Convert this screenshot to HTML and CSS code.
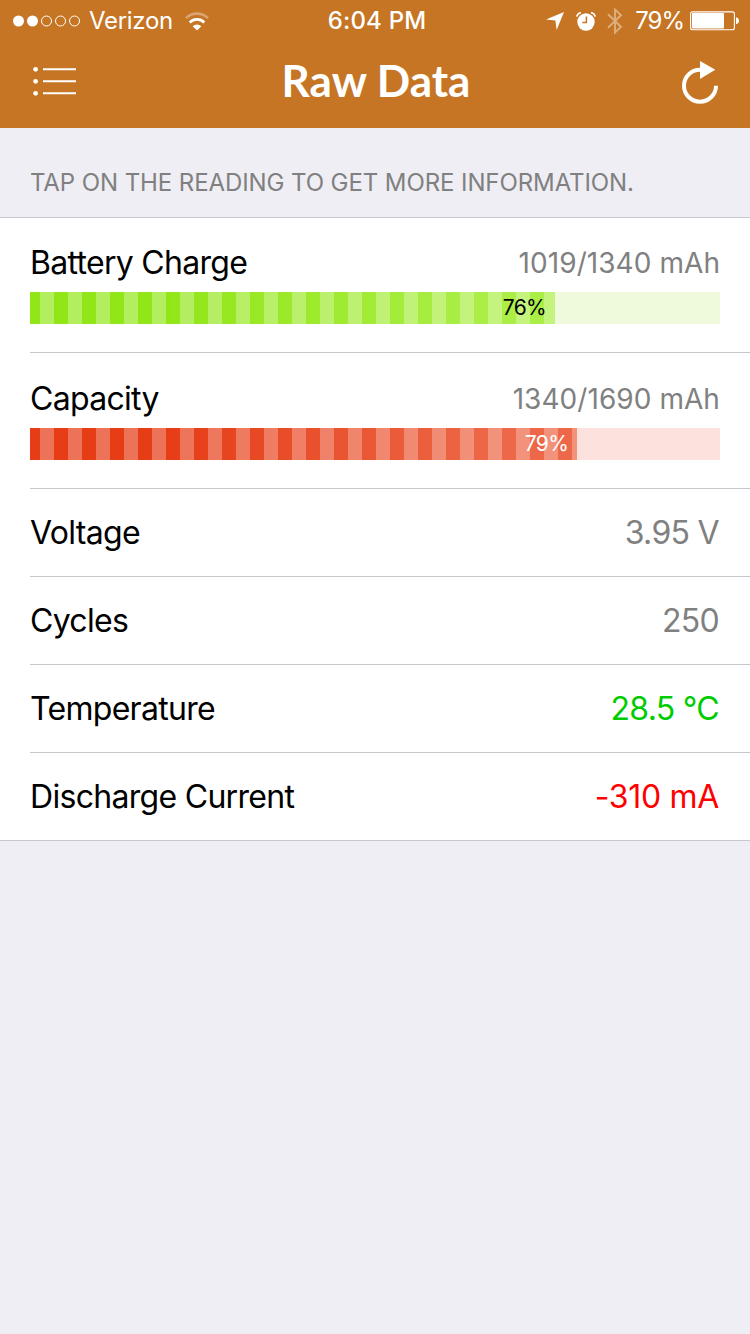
FILE: index.html
```html
<!DOCTYPE html>
<html lang="en">
<head>
    <meta charset="UTF-8">
    <meta name="viewport" content="width=device-width, initial-scale=1.0">
    <title>Raw Data</title>
    <link rel="stylesheet" href="styles.css">
</head>
<body>
    <header class="header">
        <div class="status-bar">
            <div class="status-left">
                <svg class="signal" width="68" height="14" viewBox="0 0 68 14">
                    <circle cx="5.5" cy="7" r="5.5" fill="#fff"/>
                    <circle cx="19.5" cy="7" r="5.5" fill="#fff"/>
                    <circle cx="33.5" cy="7" r="5" fill="none" stroke="#fff"/>
                    <circle cx="47.5" cy="7" r="5" fill="none" stroke="#fff"/>
                    <circle cx="61.5" cy="7" r="5" fill="none" stroke="#fff"/>
                </svg>
                <span class="carrier">Verizon</span>
                <svg class="wifi" width="24" height="19" viewBox="0 0 24 19">
                    <path d="M1 6.2a15.6 15.6 0 0 1 22 0" fill="none" stroke="#fff" stroke-opacity=".35" stroke-width="2.6"/>
                    <path d="M4.7 10.4a10.3 10.3 0 0 1 14.6 0" fill="none" stroke="#fff" stroke-width="2.8"/>
                    <path d="M12 18.6l-4.3-4.4a6.2 6.2 0 0 1 8.6 0z" fill="#fff"/>
                </svg>
            </div>
            <div class="clock">6:04 PM</div>
            <div class="status-right">
                <svg class="location" width="18" height="18" viewBox="0 0 18 18">
                    <path d="M18 0L10.6 18 9.4 8.6 0 7.6z" fill="#fff"/>
                </svg>
                <svg class="alarm" width="20" height="19" viewBox="0 0 20 19">
                    <circle cx="10" cy="10" r="8.7" fill="#fff"/>
                    <path d="M.8 4.6Q1.6 1 5 .7M19.2 4.6Q18.4 1 15 .7" fill="none" stroke="#fff" stroke-width="1.8"/>
                    <path d="M10.4 4.6v6H6.3" fill="none" stroke="#c67524" stroke-width="1.5"/>
                </svg>
                <svg class="bluetooth" width="16" height="28" viewBox="0 0 16 28">
                    <path d="M1 7.2l13 12.6-6 5.8V2.4l6 5.8L1 20.8" fill="none" stroke="#fff" stroke-opacity=".42" stroke-width="1.9"/>
                </svg>
                <span class="percent">79%</span>
                <svg class="battery" width="50" height="20" viewBox="0 0 50 20">
                    <rect x=".6" y=".9" width="43.8" height="17.8" rx="2" fill="none" stroke="#fff" stroke-width="1.1"/>
                    <rect x="2" y="2" width="32" height="15.5" rx=".8" fill="#fff"/>
                    <path d="M46 6.3q3 .6 3 3.5t-3 3.5z" fill="#fff"/>
                </svg>
            </div>
        </div>
        <nav class="nav-bar">
            <svg class="menu-icon" width="44" height="32" viewBox="0 0 44 32">
                <circle cx="2.6" cy="4.3" r="2.4" fill="#fff"/>
                <circle cx="2.6" cy="16.3" r="2.4" fill="#fff"/>
                <circle cx="2.6" cy="28.3" r="2.4" fill="#fff"/>
                <path d="M10 4.3h33M10 16.3h33M10 28.3h33" stroke="#fff" stroke-width="2"/>
            </svg>
            <h1 class="title">Raw Data</h1>
            <svg class="refresh-icon" width="38" height="44" viewBox="0 0 38 44">
                <path d="M19 8.7a16 16 0 1 0 16 16" fill="none" stroke="#fff" stroke-width="4"/>
                <path d="M19 0l15.3 8.7L19 18z" fill="#fff"/>
            </svg>
        </nav>
    </header>

    <div class="hint">TAP ON THE READING TO GET MORE INFORMATION.</div>

    <div class="list">
        <div class="meter-row">
            <div class="meter-text">
                <span class="label">Battery Charge</span>
                <span class="amount">1019/1340 mAh</span>
            </div>
            <div class="meter green">
                <div class="fill" style="width: 76.1%">76%</div>
            </div>
        </div>
        <div class="meter-row inset">
            <div class="meter-text">
                <span class="label">Capacity</span>
                <span class="amount">1340/1690 mAh</span>
            </div>
            <div class="meter red">
                <div class="fill" style="width: 79.3%">79%</div>
            </div>
        </div>
        <div class="row">
            <span class="label">Voltage</span>
            <span class="value">3.95 V</span>
        </div>
        <div class="row">
            <span class="label">Cycles</span>
            <span class="value">250</span>
        </div>
        <div class="row">
            <span class="label">Temperature</span>
            <span class="value good">28.5 °C</span>
        </div>
        <div class="row">
            <span class="label">Discharge Current</span>
            <span class="value bad">-310 mA</span>
        </div>
    </div>
</body>
</html>
```
FILE: styles.css
```css
* {
    box-sizing: border-box;
}
body {
    margin: 0;
    font-family: Inter, "Liberation Sans", sans-serif;
    background-color: #efeef4;
    color: #000;
}
svg {
    display: block;
    flex: none;
}
.header {
    height: 128px;
    background-color: #c67524;
    color: #fff;
}
.status-bar {
    display: grid;
    grid-template-columns: 1fr auto 1fr;
    align-items: center;
    height: 40px;
    padding: 1px 10px 0 13px;
    font-size: 24px;
    line-height: 40px;
}
.status-left,
.status-right {
    display: flex;
    align-items: center;
}
.status-right {
    justify-content: flex-end;
}
.carrier {
    margin: 0 12px 0 8px;
    letter-spacing: -0.3px;
}
.clock {
    padding-left: 1px;
    font-weight: 500;
    letter-spacing: 0.2px;
}
.alarm {
    margin-left: 12px;
}
.bluetooth {
    margin-left: 11px;
}
.percent {
    margin: 0 6px 0 12px;
    letter-spacing: -1px;
}
.nav-bar {
    display: grid;
    grid-template-columns: 1fr auto 1fr;
    align-items: center;
    height: 88px;
    padding: 0 31px 6px 33px;
}
.title {
    margin: -2px 0 0;
    font-family: Lato, sans-serif;
    font-size: 44px;
    font-weight: 700;
    line-height: 60px;
}
.refresh-icon {
    justify-self: end;
    margin-top: 4px;
}
.hint {
    height: 89px;
    padding: 40px 30px 0;
    font-size: 24px;
    line-height: 30px;
    letter-spacing: -0.09px;
    white-space: nowrap;
    color: #808080;
}
.list {
    background-color: #fff;
    border-top: 1px solid #c8c7cc;
    border-bottom: 1px solid #c8c7cc;
}
.meter-row {
    height: 134px;
    margin-left: 30px;
    padding: 24px 30px 0 0;
}
.meter-row.inset {
    height: 136px;
    padding-top: 25px;
}
.meter-row.inset,
.row {
    border-top: 1px solid #c8c7cc;
}
.meter-text {
    display: flex;
    justify-content: space-between;
    align-items: center;
    height: 40px;
    margin-bottom: 10px;
}
.label,
.value {
    font-size: 32px;
    letter-spacing: -0.7px;
    white-space: nowrap;
}
.amount {
    padding-top: 1px;
    font-size: 28px;
    letter-spacing: 0.06px;
    color: #808080;
}
.meter {
    height: 32px;
}
.green {
    background-color: #effadd;
}
.red {
    background-color: #fce1dd;
}
.fill {
    height: 32px;
    padding-right: 9px;
    font-size: 21px;
    line-height: 32px;
    letter-spacing: -0.6px;
    text-align: right;
}
.green .fill {
    background-image:
        repeating-linear-gradient(90deg, transparent 0 10.3px, rgba(255, 255, 255, 0.3) 10.3px 24.5px, transparent 24.5px 28px),
        linear-gradient(90deg, #91e617 0, #91e617 25%, #aaee46 85%);
}
.red .fill {
    color: #fff;
    background-image:
        repeating-linear-gradient(90deg, transparent 0 10.3px, rgba(255, 255, 255, 0.28) 10.3px 24.5px, transparent 24.5px 28px),
        linear-gradient(90deg, #e63d17 0, #e63d17 25%, #ed6848 85%);
}
.row {
    display: flex;
    justify-content: space-between;
    align-items: center;
    height: 88px;
    margin-left: 30px;
    padding-right: 30px;
}
.value {
    margin-right: 1px;
    color: #808080;
}
.value.good {
    color: #00cc00;
}
.value.bad {
    letter-spacing: -0.3px;
    color: #ff0000;
}
```
